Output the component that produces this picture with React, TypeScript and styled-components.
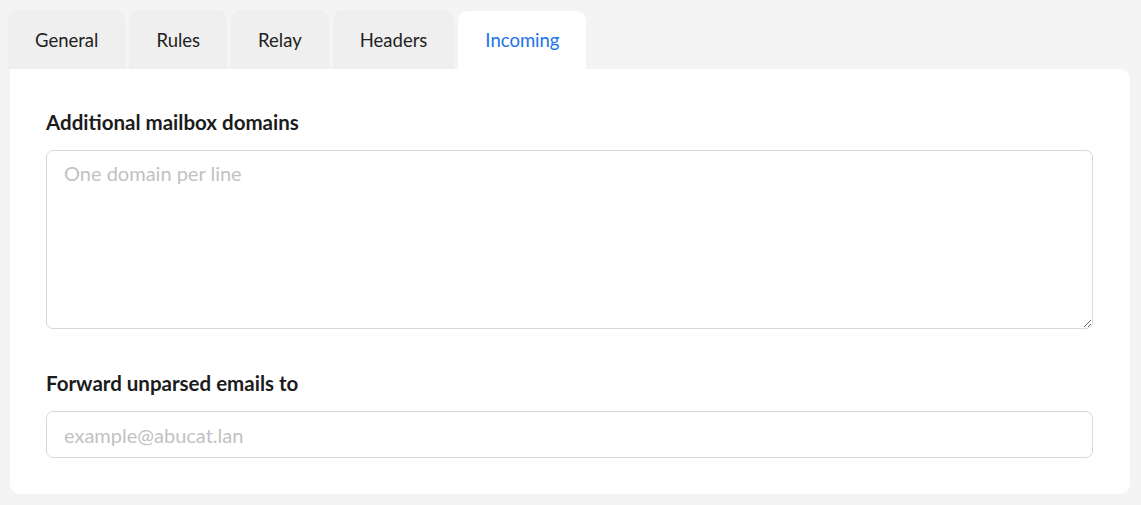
import React, { useState } from "react";
import styled, { createGlobalStyle } from "styled-components";

const GlobalStyle = createGlobalStyle`
  html, body {
    margin: 0;
    padding: 0;
    background: #f4f4f4;
    font-family: "Source Sans Pro", Lato, "Noto Sans", sans-serif;
    color: #1f1f1f;
  }
`;

const Page = styled.div`
  padding: 10px 11px 12px 10px;
`;

const TabBar = styled.div`
  display: flex;
  gap: 4px;
  margin-left: -2px;
`;

const Tab = styled.button<{ $active?: boolean }>`
  height: 59px;
  padding: 0 27px;
  border: 0;
  border-radius: 10px 10px 0 0;
  background: ${(p) => (p.$active ? "#ffffff" : "#efefef")};
  color: ${(p) => (p.$active ? "#1a73e8" : "#222")};
  font-family: inherit;
  font-size: 18.5px;
  cursor: pointer;
  ${(p) => p.$active && "margin-top: 1px; height: 58px;"}
`;

const Card = styled.div`
  background: #fff;
  border-radius: 0 10px 10px 10px;
  padding: 41px 37px 36px 36px;
  display: flex;
  flex-direction: column;
`;

const Field = styled.div`
  display: flex;
  flex-direction: column;
  gap: 16px;
  & + & {
    margin-top: 42px;
  }
`;

const Label = styled.label`
  font-size: 20.5px;
  font-weight: 700;
  color: #1c1c1c;
  line-height: 24px;
`;

const TextArea = styled.textarea`
  height: 179px;
  box-sizing: border-box;
  border: 1px solid #d9d9d9;
  border-radius: 7px;
  padding: 10px 17px;
  font-family: inherit;
  font-size: 20px;
  resize: vertical;
  outline: none;
  &::placeholder {
    color: #c2c2c2;
  }
`;

const Input = styled.input`
  height: 47px;
  box-sizing: border-box;
  border: 1px solid #d9d9d9;
  border-radius: 7px;
  padding: 0 17px;
  font-family: inherit;
  font-size: 20px;
  outline: none;
  &::placeholder {
    color: #c2c2c2;
  }
`;

const tabs = ["General", "Rules", "Relay", "Headers", "Incoming"];

export default function App() {
  const [active, setActive] = useState("Incoming");

  return (
    <>
      <GlobalStyle />
      <Page>
        <TabBar>
          {tabs.map((t) => (
            <Tab key={t} $active={t === active} onClick={() => setActive(t)}>
              {t}
            </Tab>
          ))}
        </TabBar>
        <Card>
          <Field>
            <Label>Additional mailbox domains</Label>
            <TextArea placeholder="One domain per line" />
          </Field>
          <Field>
            <Label>Forward unparsed emails to</Label>
            <Input placeholder="example@abucat.lan" />
          </Field>
        </Card>
      </Page>
    </>
  );
}
